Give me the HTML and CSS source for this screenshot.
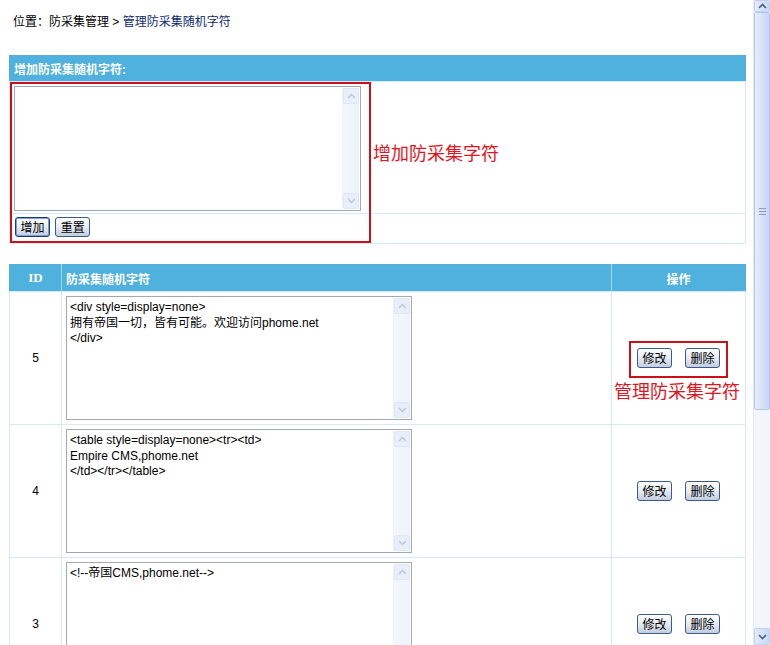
FILE: index.html
```html
<!DOCTYPE html>
<html lang="zh-CN">
<head>
    <meta charset="UTF-8">
    <title>管理防采集随机字符</title>
    <link rel="stylesheet" href="styles.css">
</head>
<body>
<div class="screen">
<div class="page">
    <div class="crumb">位置：防采集管理 &gt; <a href="#">管理防采集随机字符</a></div>

    <!-- 增加 -->
    <div class="panel">
        <table class="grid grid-add">
            <tr><th class="left">增加防采集随机字符:</th></tr>
            <tr>
                <td class="add-edit">
                    <div class="box box-add">
                        <textarea class="box-text"></textarea>
                        <div class="box-bar">
                            <span class="box-arr"><svg width="9" height="6" viewBox="0 0 9 6"><polyline points="1,5 4.5,1.5 8,5" fill="none" stroke="#b8c6dc" stroke-width="1.4"/></svg></span>
                            <span class="box-arr"><svg width="9" height="6" viewBox="0 0 9 6"><polyline points="1,1 4.5,4.5 8,1" fill="none" stroke="#b8c6dc" stroke-width="1.4"/></svg></span>
                        </div>
                    </div>
                </td>
            </tr>
            <tr>
                <td class="add-btns">
                    <button class="btn btn-def">增加</button>
                    <button class="btn">重置</button>
                </td>
            </tr>
        </table>
        <div class="mark mark-add"></div>
        <span class="note note-add">增加防采集字符</span>
    </div>

    <!-- 列表 -->
    <div class="panel panel-list">
        <table class="grid grid-list">
            <colgroup>
                <col class="c-id">
                <col class="c-text">
                <col class="c-ops">
            </colgroup>
            <tr>
                <th class="th-id">ID</th>
                <th class="left">防采集随机字符</th>
                <th>操作</th>
            </tr>
            <tr>
                <td class="id">5</td>
                <td class="edit">
                    <div class="box">
                        <textarea class="box-text">&lt;div style=display=none&gt;
拥有帝国一切，皆有可能。欢迎访问phome.net
&lt;/div&gt;</textarea>
                        <div class="box-bar">
                            <span class="box-arr"><svg width="9" height="6" viewBox="0 0 9 6"><polyline points="1,5 4.5,1.5 8,5" fill="none" stroke="#b8c6dc" stroke-width="1.4"/></svg></span>
                            <span class="box-arr"><svg width="9" height="6" viewBox="0 0 9 6"><polyline points="1,1 4.5,4.5 8,1" fill="none" stroke="#b8c6dc" stroke-width="1.4"/></svg></span>
                        </div>
                    </div>
                </td>
                <td><div class="ops"><button class="btn">修改</button><button class="btn">删除</button></div></td>
            </tr>
            <tr>
                <td class="id">4</td>
                <td class="edit">
                    <div class="box">
                        <textarea class="box-text">&lt;table style=display=none&gt;&lt;tr&gt;&lt;td&gt;
Empire CMS,phome.net
&lt;/td&gt;&lt;/tr&gt;&lt;/table&gt;</textarea>
                        <div class="box-bar">
                            <span class="box-arr"><svg width="9" height="6" viewBox="0 0 9 6"><polyline points="1,5 4.5,1.5 8,5" fill="none" stroke="#b8c6dc" stroke-width="1.4"/></svg></span>
                            <span class="box-arr"><svg width="9" height="6" viewBox="0 0 9 6"><polyline points="1,1 4.5,4.5 8,1" fill="none" stroke="#b8c6dc" stroke-width="1.4"/></svg></span>
                        </div>
                    </div>
                </td>
                <td><div class="ops"><button class="btn">修改</button><button class="btn">删除</button></div></td>
            </tr>
            <tr>
                <td class="id">3</td>
                <td class="edit">
                    <div class="box">
                        <textarea class="box-text">&lt;!--帝国CMS,phome.net--&gt;</textarea>
                        <div class="box-bar">
                            <span class="box-arr"><svg width="9" height="6" viewBox="0 0 9 6"><polyline points="1,5 4.5,1.5 8,5" fill="none" stroke="#b8c6dc" stroke-width="1.4"/></svg></span>
                            <span class="box-arr"><svg width="9" height="6" viewBox="0 0 9 6"><polyline points="1,1 4.5,4.5 8,1" fill="none" stroke="#b8c6dc" stroke-width="1.4"/></svg></span>
                        </div>
                    </div>
                </td>
                <td><div class="ops"><button class="btn">修改</button><button class="btn">删除</button></div></td>
            </tr>
        </table>
        <div class="mark mark-ops"></div>
        <span class="note note-ops">管理防采集字符</span>
    </div>
</div>

<!-- 窗口滚动条 -->
<div class="vbar">
    <span class="vbar-btn vbar-up"><svg width="9" height="6" viewBox="0 0 9 6"><polyline points="1,5 4.5,1.5 8,5" fill="none" stroke="#4d5f86" stroke-width="1.6"/></svg></span>
    <div class="vbar-track">
        <div class="vbar-thumb"><span class="grip"></span></div>
    </div>
    <span class="vbar-btn vbar-down"><svg width="9" height="6" viewBox="0 0 9 6"><polyline points="1,1 4.5,4.5 8,1" fill="none" stroke="#4d5f86" stroke-width="1.6"/></svg></span>
</div>
</div>
</body>
</html>
```

FILE: styles.css
```css
html,body{
    margin:0;
}
body{
    font: 12px "Liberation Sans", "Noto Sans CJK SC", sans-serif;
    color:#000;
    background:#fff;
}
.screen{
    display:flex;
    height:645px;
    overflow:hidden;
}
.page{
    flex:1;
    padding-left:9px;
    overflow:hidden;
}
.crumb{
    padding:15px 0 0 4px;
    height:14px;
    line-height:14px;
}
.crumb a{
    color:#0c2a6a;
    text-decoration:none;
}

/* 表格 */
.panel{
    position:relative;
    width:737px;
    margin-top:26px;
}
.panel-list{
    margin-top:20px;
}
.grid{
    width:737px;
    border-collapse:collapse;
    table-layout:fixed;
    border:1px solid #5aa9d6;
}
.grid th{
    height:25px;
    padding:0 3px;
    background:#4fb1de;
    color:#fff;
    font-weight:bold;
    text-align:center;
    border-left:1px solid #a9d9f0;
}
.grid-list th{
    height:26px;
}
.grid th:first-child{
    border-left:0;
}
.grid th.left{
    text-align:left;
    padding-left:4px;
}
.grid th.th-id{
    font-family:"Liberation Serif", serif;
    font-size:13px;
}
.grid td{
    padding:0;
    border:1px solid #d4eaf6;
    vertical-align:middle;
}
.c-id{
    width:52px;
}
.c-text{
    width:550px;
}
.add-edit{
    padding:4px 4px 2px !important;
}
.add-btns{
    height:30px;
    box-sizing:border-box;
    padding:3px 0 0 5px !important;
    vertical-align:top !important;
}
.add-btns .btn + .btn{
    margin-left:2px;
}
.id{
    text-align:center;
}
.edit{
    padding:4px !important;
}
.ops{
    display:flex;
    justify-content:center;
    gap:13px;
}

/* 文本框 */
.box{
    display:flex;
    width:346px;
    height:124px;
    box-sizing:border-box;
    border:1px solid #a3a9b2;
    background:#fff;
}
.box-add{
    width:347px;
    height:125px;
}
.box-text{
    flex:1;
    margin:0;
    border:0;
    padding:3px 3px;
    resize:none;
    outline:none;
    overflow:hidden;
    font: 12px "Liberation Sans", "Noto Sans CJK SC", sans-serif;
    line-height:15.5px;
    color:#000;
}
.box-bar{
    width:16px;
    margin:1px 1px 1px 0;
    display:flex;
    flex-direction:column;
    justify-content:space-between;
    background:linear-gradient(to right,#f3f6fc,#eef2fa);
    border-left:1px solid #eef2f9;
}
.box-arr{
    height:16px;
    display:flex;
    align-items:center;
    justify-content:center;
    background:#e9effa;
    border:1px solid #dfe7f5;
    box-sizing:border-box;
    border-radius:2px;
}

/* 按钮 */
.btn{
    width:35px;
    height:20px;
    padding:0;
    font: 12px "Noto Sans CJK SC", sans-serif;
    line-height:16px;
    color:#000;
    border:1px solid #3c5a88;
    border-radius:3px;
    background:linear-gradient(#ffffff,#e6ebf3 50%,#c2cde0);
}
.btn-def{
    border-color:#1d3a78;
    box-shadow:inset 0 0 0 1px #7ea1d8;
}

/* 标注 */
.mark{
    position:absolute;
    border:2px solid #cc1019;
    box-sizing:border-box;
}
.mark-add{
    left:1px;
    top:27px;
    width:361px;
    height:161px;
}
.mark-ops{
    left:620px;
    top:77px;
    width:99px;
    height:37px;
}
.note{
    position:absolute;
    font: 18px "Noto Sans CJK SC", sans-serif;
    line-height:22px;
    color:#e3141d;
    white-space:nowrap;
}
.note-add{
    left:364px;
    top:86px;
}
.note-ops{
    left:605px;
    top:115px;
}

/* 滚动条 */
.vbar{
    width:17px;
    display:flex;
    flex-direction:column;
    background:#f2f5fb;
    border-left:1px solid #e4e9f3;
    box-sizing:border-box;
}
.vbar-btn{
    display:flex;
    align-items:center;
    justify-content:center;
    box-sizing:border-box;
    border:1px solid #c3d1ef;
    border-radius:2px;
    background:linear-gradient(to right,#e4ecfb,#c9d7f5);
}
.vbar-up{
    height:12px;
}
.vbar-down{
    height:17px;
}
.vbar-track{
    flex:1;
}
.vbar-thumb{
    height:398px;
    display:flex;
    align-items:center;
    justify-content:center;
    box-sizing:border-box;
    border:1px solid #b5c6ec;
    border-radius:2px;
    background:linear-gradient(to right,#e6edfc,#c7d6f6);
}
.grip{
    width:7px;
    height:5px;
    border-top:1px solid #8a9cc4;
    border-bottom:1px solid #8a9cc4;
    position:relative;
}
.grip::after{
    content:"";
    display:block;
    margin-top:2px;
    border-top:1px solid #8a9cc4;
}
```
